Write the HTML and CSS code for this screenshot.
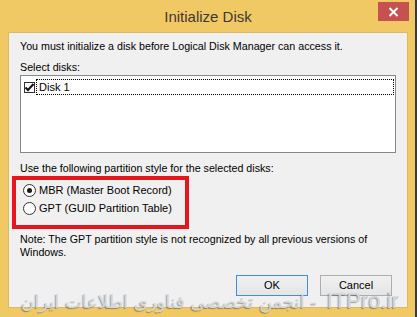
FILE: index.html
```html
<!DOCTYPE html>
<html>

<head>
	<meta charset="UTF-8">
	<title>Initialize Disk</title>
	<link rel="stylesheet" href="styles.css">
</head>

<body>
	<div class="window">
		<div class="titlebar">
			<span class="spacer"></span>
			<span class="title">Initialize Disk</span>
			<span class="close">
				<svg width="11" height="10" viewBox="0 0 11 10">
					<path d="M1.5 1 L9.5 9 M9.5 1 L1.5 9" stroke="#fff" stroke-width="2" fill="none" />
				</svg>
			</span>
		</div>

		<div class="client">
			<p class="line">You must initialize a disk before Logical Disk Manager can access it.</p>
			<p class="line label">Select disks:</p>

			<div class="listbox">
				<div class="item">
					<span class="check">
						<svg width="11" height="11" viewBox="0 0 11 11">
							<path d="M1.5 5.5 L4 8 L9.5 2" stroke="#111" stroke-width="2" fill="none" />
						</svg>
					</span>
					<span class="focus">Disk 1</span>
				</div>
			</div>

			<p class="line label-style">Use the following partition style for the selected disks:</p>

			<div class="highlight">
				<div class="radio-row">
					<span class="radio on"></span>
					<span>MBR (Master Boot Record)</span>
				</div>
				<div class="radio-row">
					<span class="radio"></span>
					<span>GPT (GUID Partition Table)</span>
				</div>
			</div>

			<p class="line note">Note: The GPT partition style is not recognized by all previous versions of<br>Windows.</p>

			<div class="buttons">
				<span class="btn default">OK</span>
				<span class="btn">Cancel</span>
			</div>
		</div>

		<div class="watermark">انجمن تخصصی فناوری اطلاعات ایران - <span class="site">ITPro.ir</span></div>
	</div>
</body>

</html>
```

FILE: styles.css
```css
html,
body {
	margin: 0;
	padding: 0;
	height: 100%;
}

body {
	background: #3a3a3a;
	font-family: "Liberation Sans", Arial, sans-serif;
	font-size: 10.7px;
	color: #000;
}

.window {
	position: relative;
	width: 415px;
	height: 317px;
	box-sizing: border-box;
	background: #f0c864;
	padding: 0 7px 9px 8px;
	display: flex;
	flex-direction: column;
}

.titlebar {
	height: 32px;
	display: grid;
	grid-template-columns: 1fr auto 1fr;
	align-items: start;
}

.title {
	font-size: 15px;
	color: #3c3a34;
	line-height: 15px;
	padding-top: 9px;
}

.close {
	justify-self: end;
	width: 31px;
	height: 19px;
	margin-top: 2px;
	margin-right: -1px;
	background: #c75050;
	display: flex;
	justify-content: center;
	align-items: center;
}

.client {
	flex: 1;
	background: #f0f0f0;
	border: 1px solid #dcb85e;
	padding: 7px 15px 11px 11px;
	display: flex;
	flex-direction: column;
}

.line {
	margin: 0;
	line-height: 13px;
	white-space: nowrap;
}

.label {
	margin-top: 8px;
}

.listbox {
	margin-top: 1px;
	width: 370px;
	height: 73px;
	background: #fff;
	border: 1px solid #828790;
	padding: 3px 1px 0 3px;
}

.item {
	display: flex;
	align-items: center;
	height: 16px;
}

.check {
	width: 11px;
	height: 11px;
	box-sizing: border-box;
	border: 1px solid #333;
	background: #fff;
	display: flex;
	margin-right: 1px;
}

.check svg {
	margin: -1px;
}

.focus {
	flex: 1;
	height: 16px;
	box-sizing: border-box;
	border: 1px dotted #000;
	padding-left: 2px;
	line-height: 14px;
	font-size: 11px;
}

.label-style {
	margin-top: 9px;
}

.highlight {
	margin: 1px 0 0 -8px;
	width: 162px;
	border: 4px solid #e8151f;
	padding: 1px 0 8px 7px;
}

.radio-row {
	height: 18px;
	display: flex;
	align-items: center;
	font-size: 11px;
}

.radio {
	width: 13px;
	height: 13px;
	box-sizing: border-box;
	border: 1px solid #333;
	border-radius: 50%;
	background: #fff;
	margin-right: 3px;
	display: flex;
	justify-content: center;
	align-items: center;
}

.radio.on::after {
	content: "";
	width: 5px;
	height: 5px;
	border-radius: 50%;
	background: #1a1a1a;
}

.note {
	margin-top: 4px;
}

.buttons {
	margin-top: auto;
	display: flex;
	justify-content: flex-end;
	gap: 12px;
}

.btn {
	width: 72px;
	height: 21px;
	box-sizing: border-box;
	border: 1px solid #adadad;
	background: linear-gradient(#f0f0f0, #e5e5e5);
	text-align: center;
	line-height: 19px;
	font-size: 11px;
}

.btn.default {
	border-color: #3c8fdc;
}

.watermark {
	position: absolute;
	left: 21px;
	top: 290px;
	font-family: "DejaVu Sans", sans-serif;
	font-size: 18px;
	line-height: 22px;
	color: #d6d6d6;
	text-shadow: -1px 1px 1px rgba(0, 0, 0, 0.35);
	white-space: nowrap;
}

.site {
	font-family: "Liberation Sans", Arial, sans-serif;
	font-size: 22px;
	margin-left: 4px;
}
```
